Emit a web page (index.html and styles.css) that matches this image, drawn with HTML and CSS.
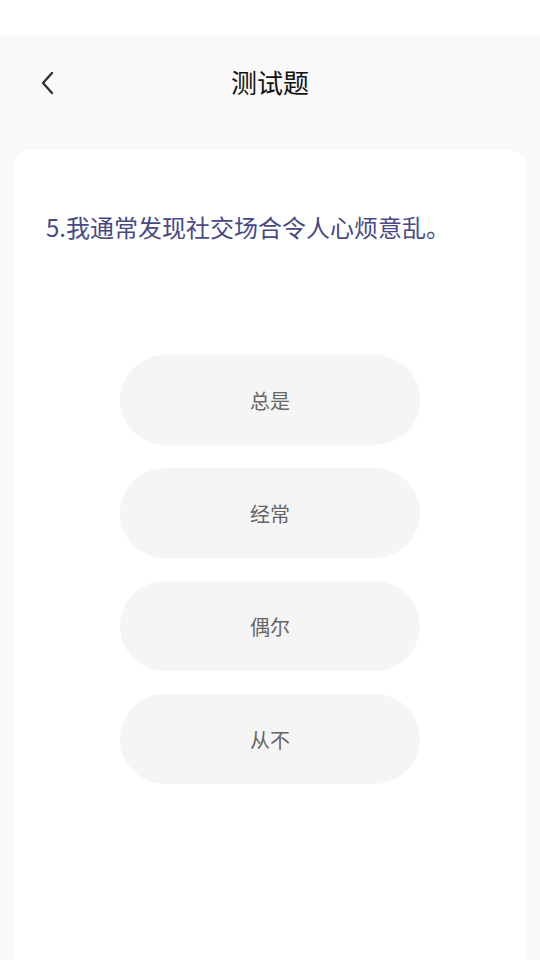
FILE: index.html
```html
<!DOCTYPE html>
<html lang="zh-CN">
<head>
<meta charset="utf-8">
<link rel="stylesheet" href="styles.css">
</head>
<body>
<div class="status"></div>
<div class="page">
  <div class="nav">
    <svg class="back" width="20" height="28" viewBox="0 0 20 28"><path d="M14 4 L5 14 L14 24" fill="none" stroke="#333" stroke-width="2.4" stroke-linecap="round" stroke-linejoin="round"/></svg>
    <div class="title">测试题</div>
  </div>
  <div class="card">
    <div class="question">5.我通常发现社交场合令人心烦意乱。</div>
    <div class="options">
      <div class="opt">总是</div>
      <div class="opt">经常</div>
      <div class="opt">偶尔</div>
      <div class="opt">从不</div>
    </div>
  </div>
</div>
</body>
</html>
```
FILE: styles.css
```css
html, body { margin: 0; padding: 0; }
body {
  width: 540px; height: 960px; overflow: hidden;
  background: #f9f9f9;
  font-family: "Noto Sans CJK SC", "Noto Sans", sans-serif;
}
.status { height: 36px; background: #fff; }
.page { padding: 0 14px; }
.nav {
  position: relative;
  height: 92px;
  display: flex; align-items: center; justify-content: center;
}
.back { position: absolute; left: 24px; top: 33px; }
.title { font-size: 26px; color: #111; line-height: 34px; }
.card {
  margin-top: 22px;
  background: #fff;
  border-radius: 16px 16px 0 0;
  height: 820px;
  padding: 59px 32px 0;
  box-sizing: border-box;
}
.question {
  font-size: 24px; color: #474a85; line-height: 36px;
}
.options {
  margin-top: 110px;
  display: flex; flex-direction: column; align-items: center; gap: 23px;
}
.opt {
  width: 300px; height: 90px; border-radius: 45px;
  background: #f5f5f5;
  display: flex; align-items: center; justify-content: center;
  font-size: 20px; color: #666;
}
```
